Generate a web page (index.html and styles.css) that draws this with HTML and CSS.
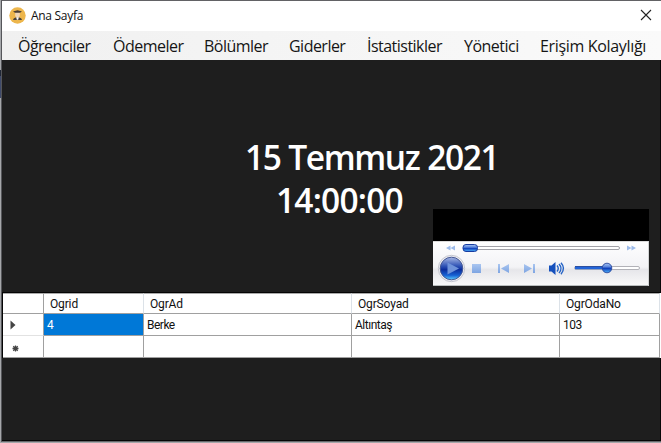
FILE: index.html
```html
<!DOCTYPE html>
<html lang="tr">
<head>
<meta charset="utf-8">
<title>Ana Sayfa</title>
<link rel="stylesheet" href="styles.css">
</head>
<body>
<div class="window">
  <header class="titlebar">
    <svg class="app-icon" width="17" height="17" viewBox="0 0 17 17">
      <circle cx="8.5" cy="8.5" r="8.2" fill="#edb64c"/>
      <path d="M4 13c.4-2 2-2.8 4.500-2.800s4.100.8 4.500 2.800z" fill="#494039"/>
      <path d="M6.200 5h4.600v3.200c0 3-4.600 3-4.600 0z" fill="#f0d6b8"/>
      <path d="M4 4.600 8.500 3.200l4.500 1.400-2 1.100H6z" fill="#493d35"/>
      <path d="M7.200 10.300h2.600l-.6 2.400H7.800z" fill="#fff"/>
    </svg>
    <span class="title">Ana Sayfa</span>
    <svg class="close" width="12" height="12" viewBox="0 0 12 12"><path d="M1 1l10 10M11 1 1 11" stroke="#222" stroke-width="1.1" fill="none"/></svg>
  </header>
  <nav class="menu">
    <span class="m1">Öğrenciler</span><span class="m2">Ödemeler</span><span class="m3">Bölümler</span><span class="m4">Giderler</span><span class="m5">İstatistikler</span><span class="m6">Yönetici</span><span class="m7">Erişim Kolaylığı</span>
  </nav>
  <main class="content">
    <section class="stage">
      <div class="date">15 Temmuz 2021</div>
      <div class="time">14:00:00</div>
      <div class="player">
        <div class="screen"></div>
        <svg class="controls" width="216" height="45" viewBox="0 0 216 45">
          <defs>
            <linearGradient id="panel" x2="0" y2="1"><stop offset="0" stop-color="#fff"/><stop offset=".58" stop-color="#f3f3f6"/><stop offset=".64" stop-color="#e6e6ea"/><stop offset="1" stop-color="#fafafa"/></linearGradient>
            <linearGradient id="knob" x2="0" y2="1"><stop offset="0" stop-color="#aac6f3"/><stop offset=".42" stop-color="#527fda"/><stop offset=".5" stop-color="#0a35b4"/><stop offset="1" stop-color="#4fb3fb"/></linearGradient>
            <linearGradient id="play" x2="0" y2="1"><stop offset="0" stop-color="#a8b8e4"/><stop offset=".4" stop-color="#2c50b4"/><stop offset=".55" stop-color="#0b2c9b"/><stop offset=".8" stop-color="#1661d4"/><stop offset="1" stop-color="#5fd0ff"/></linearGradient>
            <linearGradient id="soft" x2="0" y2="1"><stop offset="0" stop-color="#a9c5f0"/><stop offset="1" stop-color="#7ea5e2"/></linearGradient>
          </defs>
          <path d="M0 0h216v45H0z" fill="url(#panel)"/>
          <path d="M0 .5h216" stroke="#dcdcdc"/>
          <path d="M0 44.500h216" stroke="#b9bdbd"/>
          <path d="M215.500 0v45" stroke="#d2d4d4"/>
          <path d="M17.500 4.500v5l-4.500-2.500zM22 4.500v5L17.500 7zM194 4.500v5l4.500-2.500zM198.500 4.500v5L203 7z" fill="#9dbbe9"/>
          <rect x="30.500" y="5.500" width="156" height="3" rx="1.500" fill="#fff" stroke="#a2a2a8"/>
          <rect x="30" y="3.500" width="14.500" height="7" rx="3" fill="url(#knob)" stroke="#173ba0"/>
          <circle cx="18.500" cy="27.500" r="13.200" fill="#ececf1" stroke="#b9bbc5" stroke-width=".8"/>
          <circle cx="18.500" cy="27.500" r="11.300" fill="url(#play)" stroke="#455894"/>
          <path d="M14.500 21.500 26 27.500l-11.500 6z" fill="#6f93da"/>
          <path d="M39 23h9v9h-9zM65 23h2v9h-2zM76 23v9l-8-4.500zM91 23v9l8-4.500zM100 23h2v9h-2z" fill="url(#soft)"/>
          <path d="M116 24.500h2.500l4-3.500v13l-4-3.500H116z" fill="#1550bd"/>
          <path d="M124 24.500q2.500 3 0 6M126 23q4 4.500 0 9M128 21.800q5 5.700 0 11.400" stroke="#2463c6" stroke-width="1.400" fill="none"/>
          <rect x="141.500" y="25.500" width="65" height="3" rx="1.500" fill="#fff" stroke="#b2b2b8"/>
          <path d="M142 27h32" stroke="#2264d8" stroke-width="2.400"/>
          <path d="M142 25.500h32" stroke="#2c4f9f"/>
          <circle cx="174" cy="27" r="4.800" fill="url(#knob)" stroke="#29479c" stroke-width=".9"/>
        </svg>
      </div>
    </section>
    <div class="grid">
      <div class="corner"></div><div class="head">Ogrid</div><div class="head">OgrAd</div><div class="head">OgrSoyad</div><div class="head">OgrOdaNo</div>
      <div class="mark"><svg width="6" height="10" viewBox="0 0 6 10"><path d="M.5.500 5.500 5l-5 4.500z" fill="#444"/></svg></div><div class="cell selected">4</div><div class="cell">Berke</div><div class="cell">Altıntaş</div><div class="cell">103</div>
      <div class="mark star"><svg width="7" height="7" viewBox="0 0 7 7"><path d="M3.500.500v6M.5 3.500h6M1.300 1.300l4.400 4.400M5.700 1.300 1.300 5.700" stroke="#444" stroke-width="1.300"/></svg></div><div class="cell"></div><div class="cell"></div><div class="cell"></div><div class="cell"></div>
    </div>
  </main>
</div>
</body>
</html>
```
FILE: styles.css
```css
* { box-sizing: border-box; }
body {
  margin: 0;
  width: 661px;
  height: 443px;
  overflow: hidden;
  background: linear-gradient(#a5a7aa 0 30px, #a5a7aa 70px, #202736 70px 76px, #3f4a6b 76px 98px, #a5a7aa 98px);
  font-family: "Open Sans", "Noto Sans", sans-serif;
}
.window {
  margin-left: 1px;
  width: 660px;
  height: 442px;
  border-top: 1px solid #626265;
  border-left: 1px solid #55565a;
  border-bottom: 1px solid #66686b;
  background: #1e1e1e;
}
.titlebar {
  height: 30px;
  display: flex;
  align-items: center;
  padding: 0 9px 2px 7px;
  background: #fff;
}
.title {
  margin-left: 5px;
  padding-top: 1px;
  font-size: 12px;
  letter-spacing: -0.3px;
  color: #111;
}
.close { margin-left: auto; }
.menu {
  height: 29px;
  display: flex;
  align-items: center;
  padding: 1px 0 0 16px;
  background: linear-gradient(90deg, #f0f0f0, #fafafa);
  color: #151515;
  font-size: 16px;
  white-space: nowrap;
}
.menu span { flex: none; letter-spacing: -0.52px; }
.menu .m7 { width: 108px; letter-spacing: -0.33px; }
.m1 { width: 95px; }
.m2 { width: 91px; }
.m3 { width: 85px; }
.m4 { width: 78px; }
.m5 { width: 97px; }
.m6 { width: 76px; }
.content {
  height: 381px;
  border-right: 1px solid #080808;
  border-bottom: 1px solid #050505;
}
.stage {
  position: relative;
  height: 232px;
  padding-top: 76px;
  color: #fff;
  font-size: 33.500px;
  font-weight: 600;
  line-height: 43px;
}
.date { margin-left: 243px; letter-spacing: -1.4px; word-spacing: 0.5px; white-space: nowrap; }
.time { margin-left: 274px; letter-spacing: -0.8px; }
.player {
  position: absolute;
  left: 431px;
  top: 149px;
  width: 216px;
  height: 77px;
}
.screen { height: 32px; background: #000; }
.controls { display: block; }
.grid {
  display: grid;
  grid-template-columns: 41px 100px 208px 208px 100px;
  grid-template-rows: 21px 22px 22px;
  width: 659px;
  border: 1px solid #050505;
  border-right: 0;
  border-bottom: 0;
  background: #fff;
  font-family: Roboto, "Liberation Sans", sans-serif;
  font-size: 12px;
  letter-spacing: -0.15px;
  color: #111;
}
.grid > div {
  display: flex;
  align-items: center;
  border-right: 1px solid #a0a0a0;
  border-bottom: 1px solid #a0a0a0;
}
.grid .corner, .grid .head { border-top: 1px solid #aaa; }
.grid .head { padding-left: 6px; border-right-color: #dce2e8; }
.grid .corner { border-right-color: #a0a0a0; }
.grid .mark { padding-left: 7px; border-bottom-color: #e2e2e2; }
.grid .star { padding: 3px 0 0 9px; border-bottom-color: #a0a0a0; }
.grid .cell { padding: 1px 0 0 3px; letter-spacing: -0.5px; }
.grid .selected { background: #0078d7; color: #fff; }
```
